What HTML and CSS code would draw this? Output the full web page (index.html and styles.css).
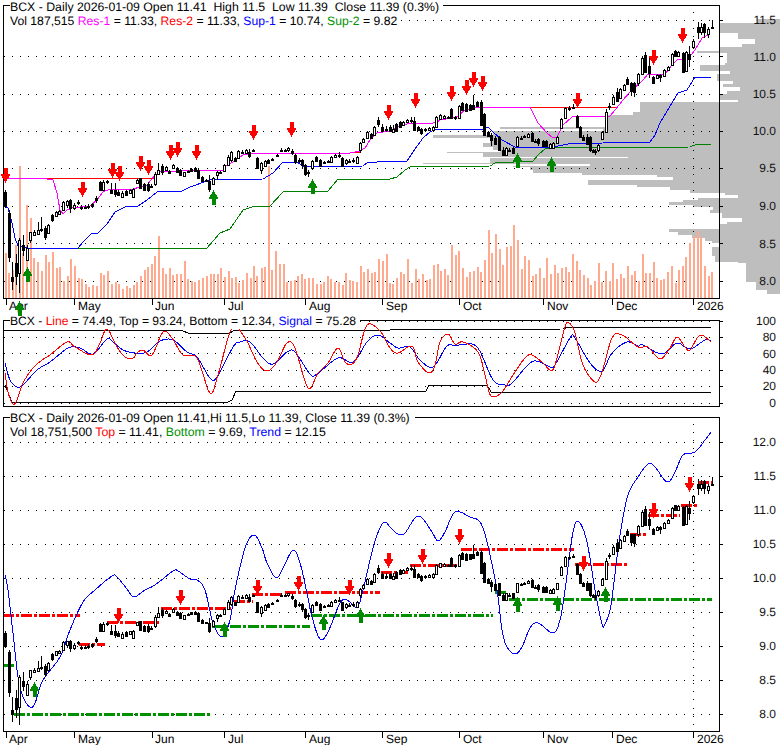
FILE: index.html
```html
<!DOCTYPE html>
<html lang="en">
<head>
<meta charset="utf-8">
<title>BCX - Daily chart</title>
<link rel="stylesheet" href="styles.css">
</head>
<body>
<main class="chart">
  <svg id="price" class="panel panel-price" viewBox="0 0 780 312" width="780" height="312" shape-rendering="crispEdges">
    <g class="layer"></g>
    <rect class="mask" x="4" y="6" width="440" height="8"></rect>
    <rect class="mask" x="4" y="14" width="397" height="14"></rect>
    <text class="txt title" x="10" y="11">BCX - Daily 2026-01-09 Open 11.41  High 11.5  Low 11.39  Close 11.39 (0.3%)</text>
    <text class="txt title-sm" x="10" y="25">Vol 187,515 <tspan class="c-magenta">Res-1</tspan> = 11.33, <tspan class="c-red">Res-2</tspan> = 11.33, <tspan class="c-blue">Sup-1</tspan> = 10.74, <tspan class="c-green">Sup-2</tspan> = 9.82</text>
    <g class="axis-x">
      <text class="txt" x="9" y="310">Apr</text><text class="txt" x="78" y="310">May</text><text class="txt" x="155" y="310">Jun</text><text class="txt" x="228" y="310">Jul</text><text class="txt" x="309" y="310">Aug</text><text class="txt" x="386" y="310">Sep</text><text class="txt" x="463" y="310">Oct</text><text class="txt" x="547" y="310">Nov</text><text class="txt" x="616" y="310">Dec</text><text class="txt" x="697" y="310">2026</text>
    </g>
    <g class="axis-y">
      <text class="txt" x="776" y="24">11.5</text><text class="txt" x="776" y="61">11.0</text><text class="txt" x="776" y="98">10.5</text><text class="txt" x="776" y="135">10.0</text><text class="txt" x="776" y="172">9.5</text><text class="txt" x="776" y="210">9.0</text><text class="txt" x="776" y="248">8.5</text><text class="txt" x="776" y="285">8.0</text>
    </g>
    <g class="top"></g>
  </svg>
  <svg id="osc" class="panel panel-osc" viewBox="0 312 780 98" width="780" height="98" shape-rendering="crispEdges">
    <g class="layer"></g>
    <rect class="mask" x="4" y="321" width="354" height="8"></rect>
    <text class="txt title-xs" x="10" y="325">BCX - <tspan class="c-red">Line</tspan> = 74.49, Top = 93.24, Bottom = 12.34, <tspan class="c-blue">Signal</tspan> = 75.28</text>
    <g class="axis-y">
      <text class="txt" x="776" y="325">100</text><text class="txt" x="776" y="341">80</text><text class="txt" x="776" y="358">60</text><text class="txt" x="776" y="374">40</text><text class="txt" x="776" y="390">20</text><text class="txt" x="776" y="407">0</text>
    </g>
  </svg>
  <svg id="trend" class="panel panel-trend" viewBox="0 410 780 335" width="780" height="335" shape-rendering="crispEdges">
    <g class="layer"></g>
    <text class="txt title" x="10" y="422">BCX - Daily 2026-01-09 Open 11.41,Hi 11.5,Lo 11.39, Close 11.39 (0.3%)</text>
    <text class="txt title" x="10" y="436">Vol 18,751,500 <tspan class="c-red">Top</tspan> = 11.41, <tspan class="c-green">Bottom</tspan> = 9.69, <tspan class="c-blue">Trend</tspan> = 12.15</text>
    <g class="axis-x">
      <text class="txt" x="9" y="743">Apr</text><text class="txt" x="78" y="743">May</text><text class="txt" x="155" y="743">Jun</text><text class="txt" x="228" y="743">Jul</text><text class="txt" x="309" y="743">Aug</text><text class="txt" x="386" y="743">Sep</text><text class="txt" x="463" y="743">Oct</text><text class="txt" x="547" y="743">Nov</text><text class="txt" x="616" y="743">Dec</text><text class="txt" x="697" y="743">2026</text>
    </g>
    <g class="axis-y">
      <text class="txt" x="776" y="446">12.0</text><text class="txt" x="776" y="480">11.5</text><text class="txt" x="776" y="514">11.0</text><text class="txt" x="776" y="548">10.5</text><text class="txt" x="776" y="582">10.0</text><text class="txt" x="776" y="616">9.5</text><text class="txt" x="776" y="650">9.0</text><text class="txt" x="776" y="684">8.5</text><text class="txt" x="776" y="718">8.0</text>
    </g>
    <g class="top"></g>
  </svg>
</main>
<script src="chart.js"></script>
</body>
</html>
```
FILE: styles.css
```css
html, body { margin: 0; padding: 0; background: #fff; }
.chart { display: flex; flex-direction: column; width: 780px; height: 745px; overflow: hidden; }
.panel { display: block; flex: none; overflow: visible; }
.txt { font-family: "Liberation Sans", Arial, sans-serif; font-size: 12px; fill: #000; white-space: pre; text-rendering: geometricPrecision; }
.title { font-size: 12.3px; }
.title-sm { font-size: 12.2px; }
.title-xs { font-size: 12.1px; }
.axis-y .txt { text-anchor: end; fill: #111; }
.mask { fill: #fff; }
.c-magenta { fill: #ff00ff; }
.c-red { fill: #ff0000; }
.c-blue { fill: #0000ff; }
.c-green { fill: #009000; }
.ln { fill: none; stroke-width: 1; }
.k { stroke: #000; }
.m { stroke: #ff00ff; }
.r { stroke: #ff0000; }
.b { stroke: #0000ff; }
.g { stroke: #008000; }
.dots { stroke: #000; stroke-width: 1; stroke-dasharray: 1 7.1; fill: none; }
.hist { fill: #bebebe; }
.vol { fill: #ffa98e; }
.body-up { fill: #fff; stroke: #000; stroke-width: 1; }
.body-dn { fill: #000; }
.wick { stroke: #000; stroke-width: 1; }
.arr-dn { fill: #ff0000; }
.arr-up { fill: #008800; }
.dash-r { stroke: #ff0000; stroke-width: 3; stroke-dasharray: 11 2 3 2; fill: none; }
.dash-g { stroke: #009000; stroke-width: 3; stroke-dasharray: 11 2 3 2; fill: none; }
```
FILE: chart.js
```js
(function () {
  var NS = 'http://www.w3.org/2000/svg';
  function el(parent, name, attrs) {
    var e = document.createElementNS(NS, name);
    for (var k in attrs) e.setAttribute(k, attrs[k]);
    parent.appendChild(e);
    return e;
  }
  function line(p, cls, pts) {
    el(p, 'polyline', { 'class': cls, points: pts.map(function (q) { return q.join(','); }).join(' ') });
  }
  /* Catmull-Rom sampled curve, for the indicator lines that are smooth in the chart */
  function smooth(p, cls, pts) {
    var out = [];
    for (var i = 0; i < pts.length - 1; i++) {
      var a = pts[Math.max(i - 1, 0)], b = pts[i], c = pts[i + 1], d = pts[Math.min(i + 2, pts.length - 1)];
      for (var s = 0; s < 6; s++) {
        var t = s / 6, t2 = t * t, t3 = t2 * t;
        out.push([
          (0.5 * (2 * b[0] + (c[0] - a[0]) * t + (2 * a[0] - 5 * b[0] + 4 * c[0] - d[0]) * t2 + (3 * b[0] - a[0] - 3 * c[0] + d[0]) * t3)).toFixed(1),
          (0.5 * (2 * b[1] + (c[1] - a[1]) * t + (2 * a[1] - 5 * b[1] + 4 * c[1] - d[1]) * t2 + (3 * b[1] - a[1] - 3 * c[1] + d[1]) * t3)).toFixed(1)
        ]);
      }
    }
    out.push(pts[pts.length - 1]);
    line(p, cls, out);
  }
  function frame(p, top, bottom, x1, gapA, gapB) {
    el(p, 'path', { 'class': 'ln k', d: 'M' + gapA + ' ' + (top + .5) + 'H3.5V' + (bottom + .5) + 'H' + (x1 + .5) + 'V' + (top + .5) + 'H' + gapB });
  }
  function hdots(p, y) { el(p, 'line', { 'class': 'dots', x1: 4, x2: 717, y1: y + .5, y2: y + .5 }); }
  function vdots(p, x, y0, y1) { el(p, 'line', { 'class': 'dots', x1: x + .5, x2: x + .5, y1: y0, y2: y1 }); }
  function tick(p, y) { el(p, 'line', { 'class': 'ln k', x1: 719, x2: 723, y1: y + .5, y2: y + .5 }); }
  function xticks(p, y0, y1) {
    [6, 74, 152, 224, 305, 382, 459, 543, 612, 693].forEach(function (x) {
      el(p, 'line', { 'class': 'ln k', x1: x + .5, x2: x + .5, y1: y0, y2: y1 });
    });
  }
  function arrow(p, x, tip, dir) {
    // dir: 1 = down arrow with tip at bottom, -1 = up arrow with tip at top
    var s = dir, t = tip, c = x + .5;
    var d = 'M' + c + ' ' + t + 'L' + (c - 5) + ' ' + (t - 9 * s) + 'H' + (c - 2) + 'V' + (t - 15 * s) + 'H' + (c + 2) + 'V' + (t - 9 * s) + 'H' + (c + 5) + 'Z';
    el(p, 'path', { 'class': dir > 0 ? 'arr-dn' : 'arr-up', d: d });
  }

  /* candles, in price-panel pixels: x, top, bottom, filled, wick top, wick bottom */
  var C = [
    [5,192,206,1,190,208],[9,213,257,1,210,262],[12,277,281,1,262,290],[16,263,276,1,254,285],[19,240,273,0,238,293],[23,245,250,1,235,256],[27,248,260,0,245,260],[30,232,240,0,232,243],[34,232,235,0,230,236],[38,230,234,0,222,235],[41,229,230,1,217,232],[45,228,237,1,226,240],[48,225,233,0,224,234],[52,215,220,1,214,222],[56,212,216,0,211,217],[59,211,214,0,210,215],[63,202,210,0,201,211],[67,201,205,0,200,208],[70,200,208,1,199,213],[74,205,208,0,203,210],[78,202,203,1,200,205],[81,207,208,1,205,210],[85,207,208,1,205,209],[88,206,207,1,204,209],[92,204,206,1,203,208],[96,198,200,1,196,203],[100,182,190,1,181,191],[103,182,190,0,180,191],[107,181,182,1,180,184],[111,190,193,1,183,194],[115,190,194,1,183,197],[118,192,195,1,190,196],[122,193,197,0,191,198],[126,191,195,1,190,196],[130,190,193,0,189,194],[133,189,197,0,188,198],[137,180,183,0,179,184],[140,178,188,1,178,189],[144,184,190,1,183,191],[148,184,190,1,182,192],[151,186,187,1,184,188],[155,174,184,0,172,186],[158,170,174,0,163,175],[162,166,172,1,164,175],[166,167,170,0,166,171],[169,171,173,1,170,174],[173,165,168,0,164,169],[177,168,172,1,167,173],[180,170,175,1,169,176],[184,172,176,0,172,177],[188,171,172,1,170,173],[191,169,171,1,168,172],[195,168,171,1,167,172],[198,170,178,1,169,179],[202,177,181,1,176,182],[206,180,181,1,179,182],[209,181,189,1,175,192],[213,178,184,0,177,185],[217,172,175,0,171,180],[220,172,173,1,171,174],[224,165,171,0,164,172],[228,157,165,0,155,166],[231,152,160,0,151,162],[235,158,161,1,157,162],[238,151,158,0,150,159],[242,152,153,1,150,154],[246,150,153,0,149,154],[249,152,156,1,149,158],[253,150,151,1,149,152],[257,158,168,1,157,169],[261,163,170,0,162,174],[265,161,166,0,160,167],[268,160,163,1,159,164],[272,159,160,1,158,161],[277,155,156,1,154,157],[281,150,151,1,148,152],[285,150,151,1,149,152],[288,148,150,0,147,152],[292,151,153,1,149,155],[295,155,162,1,154,164],[299,160,161,1,158,163],[302,160,165,1,159,169],[305,165,174,1,164,176],[308,172,173,1,170,177],[312,161,168,0,160,170],[316,157,161,1,156,162],[320,160,166,1,159,167],[324,162,163,1,161,164],[328,161,162,1,160,163],[331,157,162,0,156,163],[335,155,157,0,154,158],[339,155,156,1,152,158],[342,158,166,1,157,167],[346,160,163,0,159,165],[349,161,162,1,159,163],[353,160,161,1,158,163],[357,157,163,0,156,164],[360,143,150,0,142,153],[363,139,142,0,138,143],[367,132,138,0,131,139],[371,134,138,1,133,139],[374,127,135,0,126,136],[378,120,124,1,117,127],[382,127,131,1,124,132],[386,129,130,1,126,132],[390,127,131,1,125,132],[393,129,132,0,125,133],[396,124,131,1,123,132],[400,122,127,1,121,128],[403,122,125,0,121,126],[407,120,122,0,119,123],[411,120,121,1,117,123],[414,121,130,1,117,131],[418,127,130,1,126,131],[421,129,133,1,128,135],[425,129,130,1,128,131],[429,128,130,0,127,131],[433,127,130,0,126,131],[436,117,127,0,116,128],[440,115,119,0,114,120],[444,116,118,0,115,119],[448,117,118,1,116,119],[451,109,118,1,108,119],[455,117,118,1,116,120],[459,106,118,0,105,119],[462,103,110,1,102,111],[466,104,111,1,103,112],[470,105,110,1,104,111],[473,105,109,1,95,110],[477,102,106,1,101,107],[481,102,125,1,100,126],[484,114,135,1,113,136],[488,132,136,1,131,137],[491,135,140,1,133,146],[495,138,144,1,136,145],[499,137,150,1,136,151],[503,150,155,1,147,156],[506,148,155,0,147,156],[509,150,151,1,148,152],[513,148,153,1,147,154],[517,137,146,0,136,147],[521,138,139,1,136,140],[524,136,137,1,135,138],[528,134,137,0,133,138],[532,133,141,1,132,142],[535,141,142,1,139,143],[538,139,143,1,138,146],[543,141,146,1,140,147],[546,141,146,1,140,147],[550,144,148,0,143,149],[553,143,148,0,142,149],[557,137,143,0,136,144],[561,119,128,0,118,129],[565,108,118,0,107,119],[569,108,109,1,106,111],[573,107,108,1,104,109],[577,116,127,1,115,128],[580,127,137,1,126,138],[583,137,140,1,135,141],[587,137,144,1,134,145],[590,137,150,1,136,152],[593,150,152,1,149,153],[595,151,152,1,149,155],[598,145,150,0,144,152],[602,132,139,0,131,140],[606,112,132,0,109,133],[609,106,107,1,103,110],[613,97,104,0,95,105],[617,92,101,1,88,102],[620,89,98,0,88,99],[624,85,90,0,84,91],[627,79,84,1,77,85],[631,83,91,1,82,96],[634,83,92,1,82,97],[638,74,83,0,73,86],[642,58,74,0,56,75],[645,55,72,1,52,73],[649,66,73,1,58,78],[653,77,83,1,76,84],[657,75,78,0,74,79],[660,75,77,1,74,82],[664,70,76,0,69,77],[668,67,70,0,66,71],[672,54,65,0,53,66],[675,51,56,1,50,57],[678,52,56,0,51,57],[683,53,72,1,52,73],[686,52,71,0,51,72],[689,54,59,1,46,67],[693,41,47,0,39,49],[698,27,32,1,22,39],[701,27,32,0,23,35],[704,24,32,1,23,38],[708,29,34,0,27,38],[712,27,28,1,20,28]
  ];

  function drawCandles(p, map) {
    C.forEach(function (c) {
      var x = Math.round(c[0]), t = Math.round(map(c[1])), b = Math.round(map(c[2]));
      var wt = Math.round(map(c[4])), wb = Math.round(map(c[5]));
      el(p, 'line', { 'class': 'wick', x1: x + .5, x2: x + .5, y1: wt, y2: wb });
      if (b <= t) b = t + 1;
      if (c[3]) el(p, 'rect', { 'class': 'body-dn', x: x - 1, y: t, width: 3, height: b - t + 1 });
      else el(p, 'rect', { 'class': 'body-up', x: x - .5, y: t + .5, width: 2, height: b - t });
    });
  }

  /* ---------- price panel ---------- */
  var P = document.querySelector('#price .layer');
  var H2 = [[58,70,1100],[70,100,990],[100,118,1045],[118,132,1095],[132,142,1055],[142,152,990],[152,158,920],[158,190,1010],[190,196,1005],[196,212,930],[212,222,1020],[222,244,980],[244,252,1030],[252,262,1000],[262,272,1050],[272,282,1010],[282,300,990],[300,306,1045],[306,335,750],[335,345,730],[345,380,650],[380,388,330],[388,393,640],[393,405,310],[405,415,130],[415,430,300],[430,440,280],[440,450,310]];
  H2.forEach(function (r) { el(P, 'rect', { 'class': 'hist', x: Math.round(390 + r[2] / 3), y: Math.round(r[0] / 3), width: 780, height: Math.round(r[1] / 3) - Math.round(r[0] / 3) }); });
  var H4 = [[0,5,330],[5,10,170],[10,20,280],[20,25,715],[25,38,300],[38,43,100],[43,48,600],[48,52,370],[52,60,420],[60,68,430],[68,75,575],[75,80,800],[80,90,850],[90,105,595],[105,110,740],[110,120,840],[120,128,900],[128,135,1005],[135,145,1045],[145,150,925],[150,157,880],[157,165,838],[165,170,910],[170,180,970],[180,190,960],[190,205,995],[205,215,1055],[215,222,1010],[222,237,990],[237,247,838],[247,255,865],[255,265,905],[265,272,945],[272,280,965],[280,290,990],[290,318,965],[318,335,975],[335,340,1045],[340,395,1068],[395,420,1098],[420,432,1132]];
  H4.forEach(function (r) { el(P, 'rect', { 'class': 'hist', x: Math.round(390 + r[2] / 3), y: Math.round(150 + r[0] / 3), width: 780, height: Math.round(150 + r[1] / 3) - Math.round(150 + r[0] / 3) }); });

  [20, 56, 94, 131, 168, 206, 243, 281].forEach(function (y) { hdots(P, y); tick(P, y); });
  vdots(P, 693, 12, 298);

  var V1 = [[17,310],[27,370],[38,360],[47,285],[59,48],[70,310],[80,165],[92,205],[102,325],[113,335],[125,362],[137,315],[147,335],[158,305],[170,355],[180,350],[192,392],[203,377],[214,328],[225,347],[236,385],[247,387],[258,403],[268,412],[280,405],[291,407],[302,370],[313,375],[324,363],[336,403],[347,395],[358,402],[368,417],[380,407],[390,413],[402,405],[412,395],[424,378],[434,360],[444,350],[456,342],[466,318],[477,258],[488,353],[498,372],[510,355],[520,375],[532,372],[542,372],[554,332],[564,388],[576,393],[586,397],[598,390],[608,385],[620,378],[632,372],[642,372],[654,372],[664,355],[675,380],[686,362],[697,385],[708,380],[718,400],[730,390],[740,370],[752,385],[762,348],[772,378],[785,355],[795,350],[806,48],[817,360],[828,303],[840,342],[852,342],[862,395],[874,393],[884,390],[895,378],[906,372],[916,387],[928,384],[940,385],[950,402],[962,402],[972,397],[984,378],[994,388],[1006,397],[1018,397],[1028,405],[1038,370],[1050,390],[1060,393],[1072,395],[1082,347],[1092,367],[1104,357],[1116,370],[1126,365],[1137,327],[1149,333],[1160,312]];
  var V4 = [[0,400],[10,402],[20,385],[32,367],[43,372],[53,328],[65,398],[77,357],[87,387],[98,372],[110,390],[120,387],[132,345],[143,342],[153,363],[165,357],[175,375],[186,285],[197,315],[208,303],[219,353],[230,380],[241,365],[252,363],[263,352],[274,365],[285,330],[297,240],[306,308],[318,252],[329,297],[339,345],[350,290],[362,288],[372,225],[383,270],[395,357],[405,318],[416,330],[428,378],[438,372],[449,353],[461,385],[471,323],[482,372],[494,345],[504,368],[515,353],[527,350],[537,365],[548,312],[560,333],[570,360],[582,375],[593,385],[603,405],[614,393],[626,338],[636,395],[648,363],[659,393],[669,338],[681,387],[692,372],[702,383],[713,348],[725,375],[735,363],[746,393],[758,312],[768,368],[780,368],[791,335],[801,383],[812,390],[823,387],[833,365],[845,348],[857,398],[866,360],[878,347],[888,321],[900,278],[911,258],[923,243],[932,260],[944,348],[956,377],[966,365]];
  function vol(v, ox) { var y = Math.round(150 + v[1] / 3); el(P, 'rect', { 'class': 'vol', x: Math.round(ox + v[0] / 3) - 1, y: y, width: 2, height: 298 - y }); }
  V1.forEach(function (v) { vol(v, 0); });
  V4.forEach(function (v) { vol(v, 390); });

  // Sup-2
  line(P, 'ln g', [[78,248],[207,248],[220,233],[230,229],[243,210],[252,207],[270,206],[283,192],[328,191],[338,179],[390,179],[397,177],[405,170],[410,167],[490,166],[495,163],[533,161],[538,155],[545,149],[553,148],[690,147],[697,144],[711,144]]);
  // Sup-1
  line(P, 'ln b', [[5,207],[8,208],[12,223],[15,238],[18,246],[27,248],[78,248],[83,242],[92,233],[98,233],[107,224],[115,212],[125,207],[138,206],[147,200],[157,192],[182,191],[190,187],[210,180],[263,179],[273,173],[283,162],[297,162],[305,167],[363,166],[367,163],[388,161],[407,161],[415,149],[423,138],[430,132],[437,129],[483,129],[488,127],[493,132],[502,140],[515,147],[553,147],[568,144],[603,143],[610,142],[650,142],[655,135],[660,123],[672,103],[678,93],[687,90],[695,77],[711,77]]);
  // Res-2
  line(P, 'ln r', [[40,178],[155,178]]);
  line(P, 'ln r', [[350,152],[360,152]]);
  line(P, 'ln r', [[530,107],[616,107]]);
  // Res-1
  line(P, 'ln m', [[5,178],[40,178],[53,180],[57,193],[60,210],[63,214],[67,210],[72,208],[80,207],[90,206],[97,200],[103,192],[110,189],[133,189],[147,185],[155,175],[160,172],[167,171],[177,172],[187,170],[223,170],[227,165],[233,162],[243,155],[253,153],[350,153],[360,151],[365,148],[370,140],[377,133],[390,131],[395,128],[410,123],[433,123],[437,122],[440,120],[452,118],[458,116],[465,110],[473,108],[482,107],[530,107],[538,123],[547,133],[553,138],[557,137],[563,125],[572,117],[603,116],[610,116],[615,110],[623,100],[630,92],[643,80],[648,74],[665,74],[672,65],[678,59],[688,59],[695,50],[702,38],[708,35]]);

  drawCandles(P, function (y) { return y; });
  frame(P, 5, 298, 719, 10, 443);
  xticks(P, 298, 305);

  var top1 = document.querySelector('#price .top');
  [[5,183],[82,197],[112,178],[119,181],[140,171],[148,175],[170,160],[177,157],[196,160],[253,140],[291,137],[388,120],[415,108],[451,101],[466,95],[473,87],[482,91],[577,108],[653,65],[682,43]].forEach(function (a) { arrow(top1, a[0], a[1], 1); });
  [[19,301],[27,267],[213,190],[312,179],[517,153],[551,157]].forEach(function (a) { arrow(top1, a[0], a[1], -1); });

  /* ---------- oscillator panel ---------- */
  var O = document.querySelector('#osc .layer');
  [321, 337, 353, 370, 386, 403].forEach(function (y) { hdots(O, y); tick(O, y); });
  line(O, 'ln k', [[3,330],[183,331],[188,333],[230,333],[233,331],[390,330],[563,329],[568,327],[711,327]]);
  line(O, 'ln k', [[5,385],[12,402],[228,402],[232,400],[236,391],[426,391],[429,385],[487,385],[491,392],[711,392]]);
  smooth(O, 'ln b', [[5,363],[10,380],[17,387],[23,385],[37,370],[50,362],[68,348],[80,348],[93,354],[107,339],[113,342],[123,350],[135,353],[147,352],[160,341],[173,340],[187,352],[197,357],[210,378],[217,377],[233,347],[240,342],[250,342],[263,358],[273,364],[287,352],[295,352],[310,374],[317,374],[338,358],[353,362],[367,342],[378,335],[390,343],[398,348],[410,347],[420,360],[433,367],[447,346],[455,346],[465,344],[478,348],[493,380],[505,385],[512,383],[530,363],[540,362],[550,367],[555,365],[570,338],[575,338],[590,363],[602,371],[612,353],[627,342],[638,346],[643,345],[662,354],[677,343],[690,349],[705,340],[711,341]]);
  smooth(O, 'ln r', [[5,373],[8,392],[13,404],[17,400],[23,383],[33,368],[42,360],[50,355],[67,342],[75,347],[92,355],[100,343],[107,329],[117,347],[125,357],[133,358],[137,353],[143,350],[152,355],[163,332],[172,338],[183,355],[197,358],[210,393],[218,375],[232,328],[245,338],[257,362],[267,371],[277,362],[287,343],[295,348],[308,388],[318,373],[328,363],[338,348],[345,362],[352,364],[358,355],[367,325],[380,331],[390,348],[398,353],[412,346],[418,362],[429,373],[435,365],[440,342],[448,334],[455,344],[463,342],[478,352],[485,375],[491,396],[502,392],[513,375],[525,358],[532,355],[543,363],[550,370],[555,365],[565,327],[569,323],[575,333],[583,365],[595,382],[602,372],[612,338],[622,335],[638,347],[648,347],[660,359],[670,348],[677,337],[685,347],[690,350],[700,335],[711,342]]);
  frame(O, 320, 406, 719, 10, 360);

  /* ---------- trend panel ---------- */
  var T = document.querySelector('#trend .layer');
  [442, 476, 510, 544, 578, 612, 646, 680, 714].forEach(function (y) { hdots(T, y); tick(T, y); });
  vdots(T, 693, 424, 731);

  [[3,80,615],[79,105,644],[107,160,622],[161,233,608],[234,253,601],[252,283,594],[285,380,592],[381,408,572],[410,460,565],[461,574,549],[575,629,564],[630,647,534],[648,680,515],[681,698,505],[698,712,482]].forEach(function (d) {
    el(T, 'line', { 'class': 'dash-r', x1: d[0], x2: d[1], y1: d[2], y2: d[2] });
  });
  [[3,14,665],[14,212,714],[212,310,626],[311,493,615],[495,508,592],[509,712,599]].forEach(function (d) {
    el(T, 'line', { 'class': 'dash-g', x1: d[0], x2: d[1], y1: d[2], y2: d[2] });
  });
  smooth(T, 'ln b', [[5,575],[8,590],[13,633],[18,677],[23,697],[30,707],[35,703],[43,680],[60,657],[70,630],[83,602],[95,590],[112,576],[117,577],[127,589],[134,597],[145,590],[155,585],[173,571],[178,571],[190,579],[197,580],[205,590],[213,623],[222,637],[230,620],[235,590],[245,548],[254,535],[262,548],[267,563],[276,578],[283,568],[293,550],[300,563],[307,593],[312,617],[320,639],[328,632],[340,603],[347,600],[357,607],[363,590],[373,548],[380,528],[385,522],[390,527],[398,534],[405,533],[415,518],[422,518],[432,532],[438,541],[445,532],[455,512],[470,517],[480,522],[487,542],[497,590],[502,630],[507,647],[515,654],[522,647],[530,628],[538,623],[553,633],[560,620],[565,590],[573,532],[579,522],[587,542],[595,590],[602,624],[605,624],[610,610],[613,590],[620,535],[628,495],[638,477],[648,464],[655,467],[667,482],[675,472],[683,455],[695,452],[705,440],[711,432]]);
  drawCandles(T, function (y) { return 714 - (281 - y) * 68 / 75; });
  frame(T, 417, 731, 719, 10, 415);
  xticks(T, 731, 738);

  var top3 = document.querySelector('#trend .top');
  [[118,623],[180,605],[257,595],[298,591],[349,595],[388,568],[422,564],[459,544],[583,571],[653,518],[689,492]].forEach(function (a) { arrow(top3, a[0], a[1], 1); });
  [[34,682],[224,622],[323,615],[360,608],[517,597],[557,596],[605,587]].forEach(function (a) { arrow(top3, a[0], a[1], -1); });
})();
```
